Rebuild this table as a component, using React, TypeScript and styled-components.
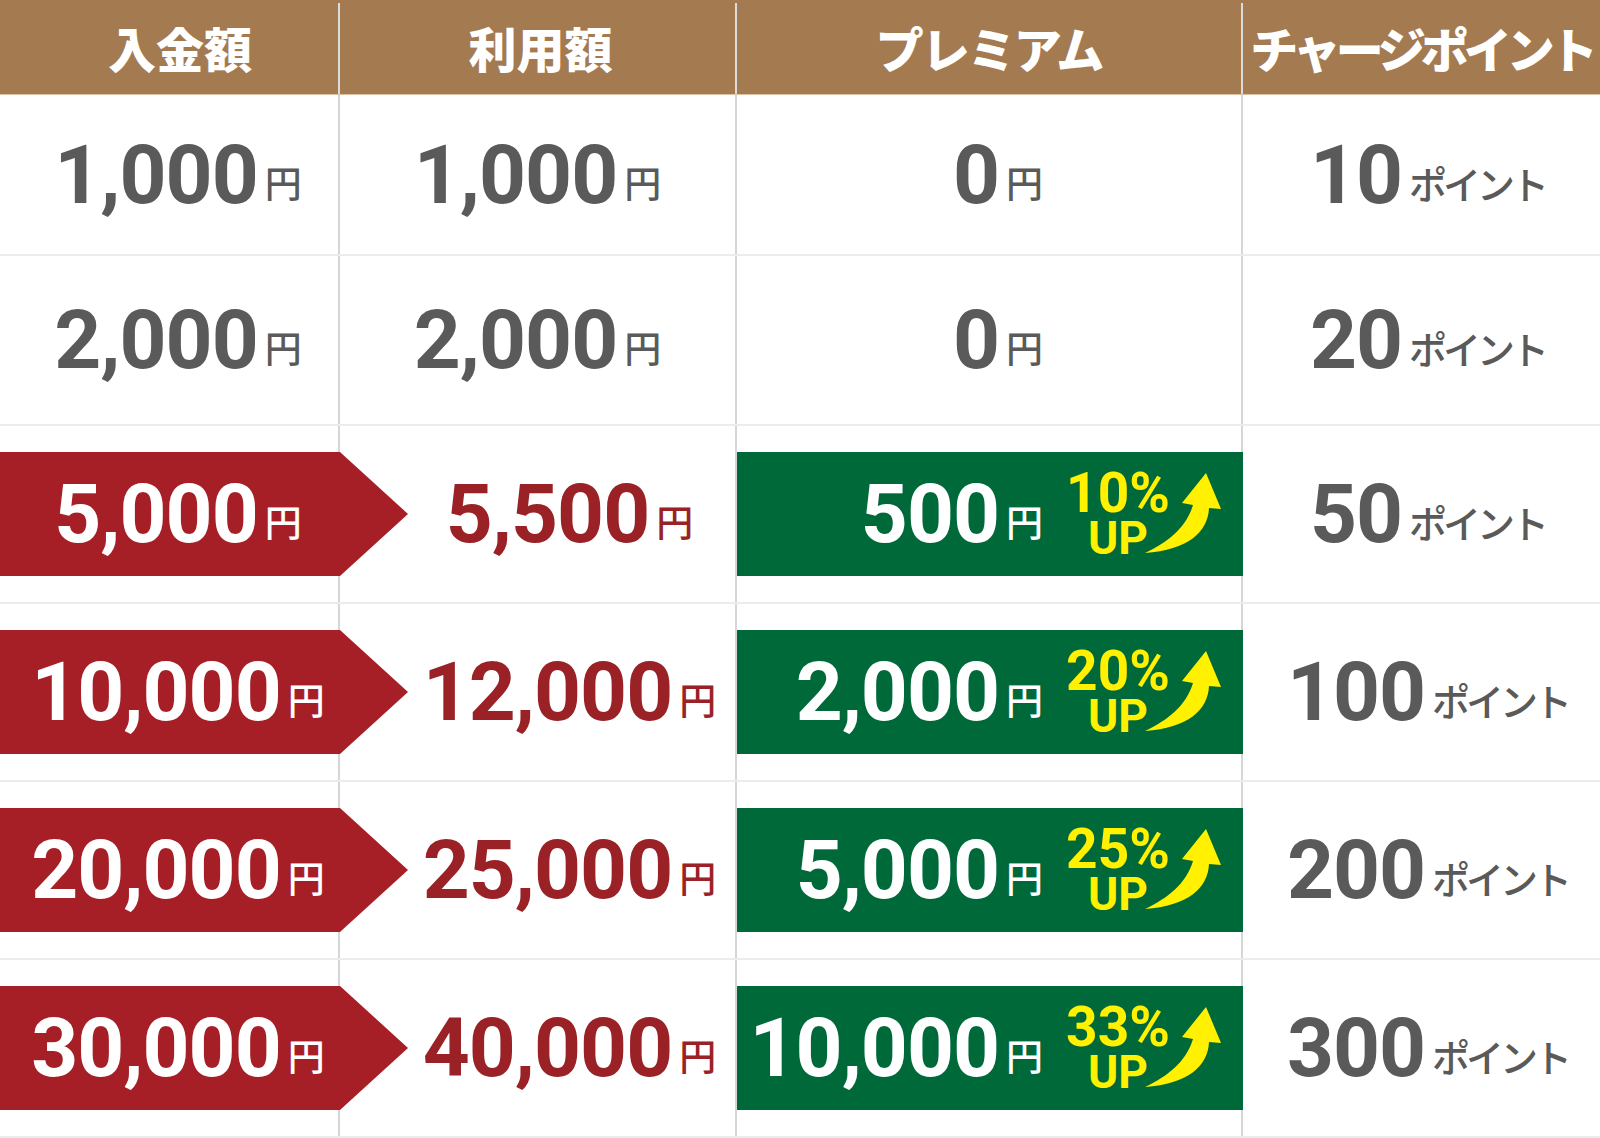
import styled, { createGlobalStyle } from "styled-components";

const GlobalStyle = createGlobalStyle`
  * {
    box-sizing: border-box;
  }
  body {
    margin: 0;
    background: #fff;
    font-family: Roboto, "Noto Sans CJK JP", sans-serif;
  }
`;

const COLS = "340px 397px 506px 1fr";
const GRAY = "#595a59";
const RED = "#a61f27";
const DARK_RED = "#9a2227";
const GREEN = "#00693a";
const YELLOW = "#fff100";

type Plan = {
  deposit: string;
  usable: string;
  premium: string;
  rate?: string;
  points: string;
  height: number;
};

const plans: Plan[] = [
  { deposit: "1,000", usable: "1,000", premium: "0", points: "10", height: 161 },
  { deposit: "2,000", usable: "2,000", premium: "0", points: "20", height: 170 },
  { deposit: "5,000", usable: "5,500", premium: "500", rate: "10%", points: "50", height: 178 },
  { deposit: "10,000", usable: "12,000", premium: "2,000", rate: "20%", points: "100", height: 178 },
  { deposit: "20,000", usable: "25,000", premium: "5,000", rate: "25%", points: "200", height: 178 },
  { deposit: "30,000", usable: "40,000", premium: "10,000", rate: "33%", points: "300", height: 178 },
];

export default function App() {
  return (
    <>
      <GlobalStyle />
      <Table>
        <HeaderRow>
          <HeaderCell $padLeft={22}>入金額</HeaderCell>
          <HeaderCell $padLeft={6}>利用額</HeaderCell>
          <HeaderCell $spacing={-2}>プレミアム</HeaderCell>
          <HeaderCell $spacing={-5}>チャージポイント</HeaderCell>
        </HeaderRow>

        {plans.map((p) => {
          const bonus = !!p.rate;
          return (
            <Row key={p.deposit} $height={p.height}>
              <Cell>
                <DepositBox $filled={bonus}>
                  <Amount $color={bonus ? "#fff" : GRAY}>
                    <Num>{p.deposit}</Num>
                    <Unit>円</Unit>
                  </Amount>
                </DepositBox>
              </Cell>

              <Cell $padLeft={bonus ? 64 : 0}>
                <Amount $color={bonus ? DARK_RED : GRAY}>
                  <Num>{p.usable}</Num>
                  <Unit>円</Unit>
                </Amount>
              </Cell>

              <Cell>
                <PremiumBox $filled={bonus}>
                  <Amount $color={bonus ? "#fff" : GRAY}>
                    <Num>{p.premium}</Num>
                    <Unit>円</Unit>
                  </Amount>
                  <Boost>
                    {bonus && (
                      <>
                        <Badge>
                          <Rate>{p.rate}</Rate>
                          <Up>UP</Up>
                        </Badge>
                        <UpArrow width="84" height="88" viewBox="0 0 84 88">
                          <path
                            d="M5 83 C28 72 46 58 53 35 L42 33 L66 3 L81 39 L69 38 C68 62 48 80 5 83 Z"
                            fill={YELLOW}
                          />
                        </UpArrow>
                      </>
                    )}
                  </Boost>
                </PremiumBox>
              </Cell>

              <Cell $padLeft={12}>
                <Amount $color={GRAY}>
                  <Num>{p.points}</Num>
                  <PointUnit>ポイント</PointUnit>
                </Amount>
              </Cell>
            </Row>
          );
        })}
      </Table>
    </>
  );
}

const Table = styled.div`
  width: 1600px;
`;

const HeaderRow = styled.div`
  display: grid;
  grid-template-columns: ${COLS};
  height: 95px;
  padding-top: 3px;
  background: #a47a51;
  border-bottom: 1px solid #d9c4a9;
`;

const HeaderCell = styled.div<{ $spacing?: number; $padLeft?: number }>`
  display: flex;
  align-items: center;
  justify-content: center;
  border-right: 2px solid #dcdcdc;
  color: #fff;
  font-family: "Noto Sans CJK JP", sans-serif;
  font-weight: 900;
  font-size: 48px;
  letter-spacing: ${(p) => p.$spacing ?? 0}px;
  white-space: nowrap;
  padding-bottom: 3px;
  padding-left: ${(p) => p.$padLeft ?? 0}px;
  &:last-child {
    border-right: none;
  }
`;

const Row = styled.div<{ $height: number }>`
  display: grid;
  grid-template-columns: ${COLS};
  height: ${(p) => p.$height}px;
  border-bottom: 2px solid #ececec;
`;

const Cell = styled.div<{ $padLeft?: number }>`
  display: flex;
  align-items: center;
  justify-content: center;
  min-width: 0;
  padding-left: ${(p) => p.$padLeft ?? 0}px;
  border-right: 2px solid #d6d6d6;
  &:last-child {
    border-right: none;
  }
`;

const DepositBox = styled.div<{ $filled: boolean }>`
  position: relative;
  z-index: 1;
  flex: none;
  display: flex;
  align-items: center;
  justify-content: center;
  width: calc(100% + 2px);
  margin-right: -2px;
  height: 124px;
  padding-left: 16px;
  background: ${(p) => (p.$filled ? RED : "transparent")};

  &::after {
    content: "";
    display: ${(p) => (p.$filled ? "block" : "none")};
    position: absolute;
    left: 100%;
    top: 0;
    width: 68px;
    height: 100%;
    background: ${RED};
    clip-path: polygon(0 0, 100% 50%, 0 100%);
  }
`;

const PremiumBox = styled.div<{ $filled: boolean }>`
  flex: none;
  display: flex;
  align-items: center;
  justify-content: flex-end;
  width: calc(100% + 2px);
  margin-right: -2px;
  height: 124px;
  padding-right: 19px;
  background: ${(p) => (p.$filled ? GREEN : "transparent")};
`;

const Amount = styled.span<{ $color: string }>`
  color: ${(p) => p.$color};
  white-space: nowrap;
`;

const Num = styled.span`
  font-family: Roboto, "Liberation Sans", sans-serif;
  font-weight: 700;
  font-size: 82px;
  letter-spacing: -1px;
`;

const Unit = styled.span`
  font-family: "Noto Sans CJK JP", sans-serif;
  font-weight: 500;
  font-size: 37px;
  margin-left: 7px;
  vertical-align: 5px;
`;

const PointUnit = styled.span`
  font-family: "Noto Sans CJK JP", sans-serif;
  font-weight: 500;
  font-size: 38px;
  letter-spacing: -4px;
  margin-left: 7px;
  vertical-align: 4px;
`;

const Boost = styled.div`
  flex: none;
  display: flex;
  align-items: center;
  width: 160px;
  margin-left: 21px;
`;

const Badge = styled.div`
  flex: none;
  width: 108px;
  text-align: center;
  color: ${YELLOW};
  font-family: Roboto, "Liberation Sans", sans-serif;
  font-weight: 700;
`;

const Rate = styled.div`
  font-size: 55px;
  line-height: 48px;
`;

const Up = styled.div`
  font-size: 46px;
  line-height: 42px;
`;

const UpArrow = styled.svg`
  flex: none;
  margin-left: -32px;
`;
